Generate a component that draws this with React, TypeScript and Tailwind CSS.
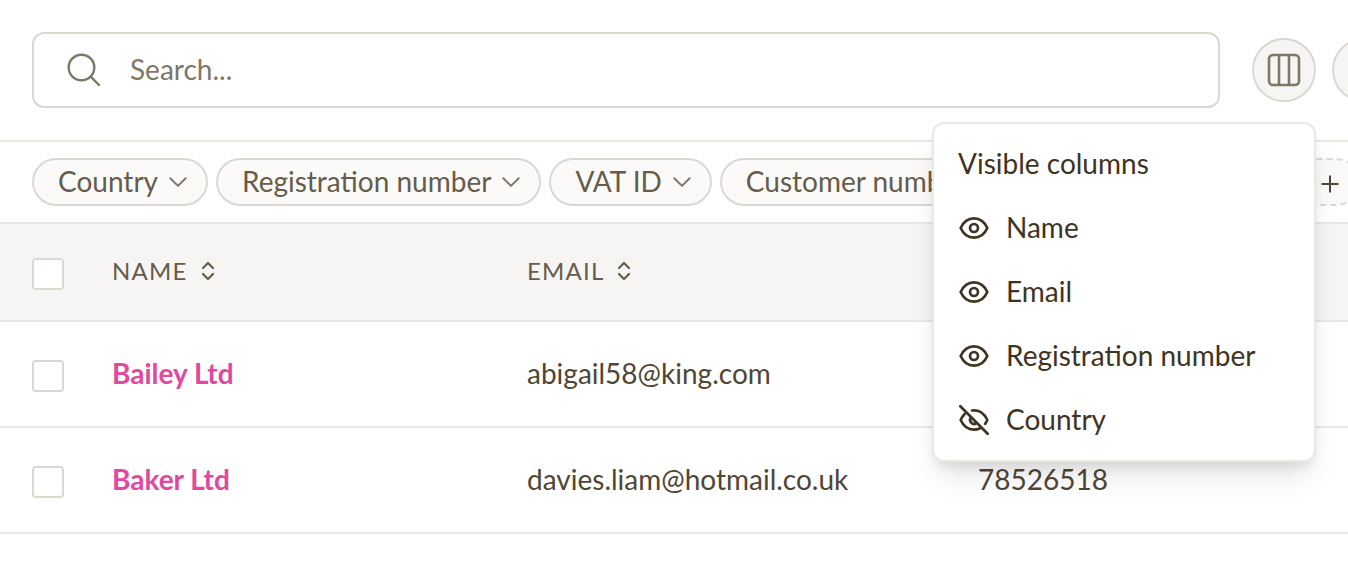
import { useState } from "react";

function classNames(...classes: (string | false)[]) {
  return classes.filter(Boolean).join(" ");
}

const filters = ["Country", "Registration number", "VAT ID", "Customer number"];

const columns = [
  { name: "Name", visible: true },
  { name: "Email", visible: true },
  { name: "Registration number", visible: true },
  { name: "Country", visible: false },
];

const customers = [
  { name: "Bailey Ltd", email: "abigail58@king.com", registration: "" },
  { name: "Baker Ltd", email: "davies.liam@hotmail.co.uk", registration: "78526518" },
];

const SearchIcon = () => (
  <svg className="size-9 shrink-0" viewBox="0 0 36 36" fill="none" stroke="currentColor" strokeWidth="2.4" strokeLinecap="round" aria-hidden="true">
    <circle cx="15.5" cy="15.5" r="12.8" />
    <path d="M24.7 24.7 33 33" />
  </svg>
);

const ColumnsIcon = () => (
  <svg className="size-9" viewBox="0 0 36 36" fill="none" stroke="currentColor" strokeWidth="2.6" aria-hidden="true">
    <rect x="3" y="3" width="30" height="30" rx="4" />
    <path d="M13 3v30M23 3v30" />
  </svg>
);

const ChevronIcon = () => (
  <svg className="size-6 shrink-0 text-[#7f7767]" viewBox="0 0 24 24" fill="none" stroke="currentColor" strokeWidth="2" strokeLinecap="round" strokeLinejoin="round" aria-hidden="true">
    <path d="m4.300 8.200 7.700 7.700 7.700-7.700" />
  </svg>
);

const SortIcon = () => (
  <svg className="h-6 w-4" viewBox="0 0 16 24" fill="none" stroke="currentColor" strokeWidth="2.2" strokeLinecap="round" strokeLinejoin="round" aria-hidden="true">
    <path d="m3 9 5-5 5 5M3 15l5 5 5-5" />
  </svg>
);

const EyeIcon = () => (
  <svg className="size-8 shrink-0" viewBox="0 0 32 32" fill="none" stroke="currentColor" strokeWidth="2.7" strokeLinecap="round" strokeLinejoin="round" aria-hidden="true">
    <path d="M2.700 16C5.200 10.300 10.200 6.300 16 6.300S26.800 10.300 29.300 16C26.800 21.700 21.800 25.700 16 25.700S5.200 21.700 2.700 16Z" />
    <circle cx="16" cy="16" r="4" />
  </svg>
);

const EyeOffIcon = () => (
  <svg className="size-8 shrink-0" viewBox="0 0 32 32" fill="none" stroke="currentColor" strokeWidth="2.7" strokeLinecap="round" strokeLinejoin="round" aria-hidden="true">
    <path d="M2.300 2.300l27.400 27.400M14 6.500C20.800 5.500 26.500 9.600 29.300 16 28.700 17.400 28 18.700 27.100 19.800M6.500 10.300C4.900 11.900 3.600 13.800 2.700 16 5.200 21.700 10.200 25.700 16 25.700 18.200 25.700 20.200 25.100 22 24.200M12.700 13.800A4 4 0 0 0 18.200 19.300" />
  </svg>
);

export default function App() {
  const [items, setItems] = useState(columns);

  const toggle = (name: string) => {
    setItems(items.map((item) => (item.name === name ? { ...item, visible: !item.visible } : item)));
  };

  const checkbox = "mt-1 block size-8 appearance-none rounded-sm border-2 border-[#dbd8d1] bg-white checked:bg-[#e1499f]";

  return (
    <div className="min-h-screen overflow-hidden bg-white font-['Lato',sans-serif] text-[28px] leading-9 text-[#504636]">
      {/* Search */}
      <div className="flex items-center gap-8 border-b-2 border-[#e9e8e5] py-8 pl-8">
        <label className="flex h-[76px] flex-1 items-center gap-7 rounded-xl border-2 border-[#dbd8d1] px-8 text-[#7f7767]">
          <SearchIcon />
          <input type="search" aria-label="Search" placeholder="Search..." className="min-w-0 flex-1 pb-0.5 outline-none placeholder:text-[#7f7767] placeholder:opacity-100" />
        </label>
        <div className="flex w-24 shrink-0 gap-4">
          <div className="relative shrink-0">
            <button type="button" aria-label="Columns" className="flex size-16 items-center justify-center rounded-full border-2 border-[#dbd8d1] bg-[#f6f5f4] text-[#7f7767]">
              <ColumnsIcon />
            </button>
            {/* Visible columns menu */}
            <div className="absolute top-full right-0 z-10 mt-5 w-96 rounded-xl border-2 border-[#e9e8e5] bg-white py-2 text-[#3d3424] shadow-[0_20px_30px_-6px_rgba(0,0,0,0.1),0_8px_12px_-4px_rgba(0,0,0,0.1)]">
              <h2 className="flex h-16 items-center px-6 pb-0.5">Visible columns</h2>
              {items.map((item) => (
                <button key={item.name} type="button" aria-pressed={item.visible} onClick={() => toggle(item.name)} className="flex h-16 w-full items-center gap-4 px-6 text-left">
                  {item.visible ? <EyeIcon /> : <EyeOffIcon />}
                  <span className="pb-0.5">{item.name}</span>
                </button>
              ))}
            </div>
          </div>
          <button type="button" aria-label="Settings" className="size-16 shrink-0 rounded-full border-2 border-[#dbd8d1] bg-[#f6f5f4]"></button>
        </div>
      </div>

      {/* Filters */}
      <div className="flex gap-2 border-b-2 border-[#e9e8e5] py-4 pl-8">
        {filters.map((filter) => (
          <button key={filter} type="button" className="flex h-12 shrink-0 items-center gap-2 rounded-full border-2 border-[#dbd8d1] bg-[#fbfaf9] pr-4 pl-6 text-[#655c4a]">
            <span className="pb-0.5">{filter}</span>
            <ChevronIcon />
          </button>
        ))}
        <button type="button" aria-label="Add filter" className="-mr-3 ml-auto flex h-12 w-32 shrink-0 items-center justify-end rounded-full border-2 border-dashed border-[#dbd8d1] bg-[#fbfaf9] pr-4 text-[#504636]">
          <svg className="size-6" viewBox="0 0 24 24" fill="none" stroke="currentColor" strokeWidth="2" aria-hidden="true">
            <path d="M12 5.500v17M3.500 14h17" />
          </svg>
        </button>
      </div>

      {/* Customers */}
      <table className="w-full table-fixed text-left">
        <thead>
          <tr className="h-[97px] border-b-2 border-[#e9e8e5] bg-[#f6f5f4] text-2xl text-[#655c4a]">
            <th className="w-24 pl-8">
              <input type="checkbox" aria-label="Select all" className={checkbox} />
            </th>
            {["Name", "Email"].map((title, index) => (
              <th key={title} className={classNames("px-4 pb-0.5 font-normal", index === 0 && "w-[415px]", index === 1 && "w-[451px]")}>
                <button type="button" className="flex items-center gap-3 tracking-wider uppercase">
                  {title}
                  <SortIcon />
                </button>
              </th>
            ))}
            <th className="px-4" aria-label="Registration number"></th>
          </tr>
        </thead>
        <tbody>
          {customers.map((customer) => (
            <tr key={customer.name} className="h-[106px] border-b-2 border-[#e9e8e5]">
              <td className="pl-8">
                <input type="checkbox" aria-label={customer.name} className={checkbox} />
              </td>
              <td className="px-4 pb-0.5">
                <a href="#" className="font-bold text-[#e1499f]">{customer.name}</a>
              </td>
              <td className="px-4 pb-0.5">{customer.email}</td>
              <td className="px-4 pb-0.5">{customer.registration}</td>
            </tr>
          ))}
        </tbody>
      </table>
    </div>
  );
}
